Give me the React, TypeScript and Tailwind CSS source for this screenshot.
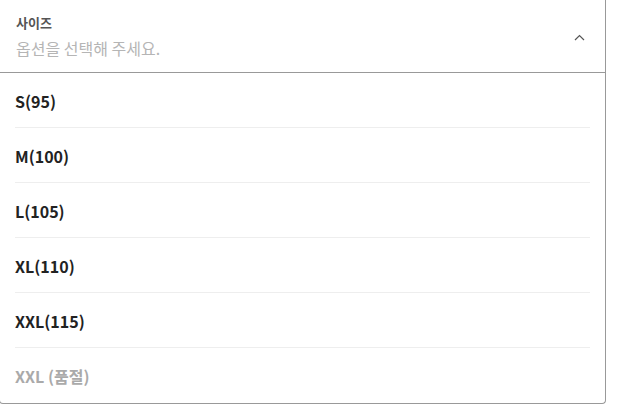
const SIZES = [
  { label: 'S(95)', soldOut: false },
  { label: 'M(100)', soldOut: false },
  { label: 'L(105)', soldOut: false },
  { label: 'XL(110)', soldOut: false },
  { label: 'XXL(115)', soldOut: false },
  { label: 'XXL (품절)', soldOut: true },
];

export default function App() {
  return (
    <div className="w-[618px] h-[407px] bg-white overflow-hidden font-['Noto_Sans_CJK_KR','Noto_Sans',sans-serif]">
      <div className="ml-[-1px] w-[607px] border border-t-0 border-[#999] rounded-b-[4px] bg-white">
        {/* header */}
        <div className="h-[73px] border-b border-[#999] flex items-center pl-[16px] pr-[20px]">
          <div className="flex-1">
            <p className="text-[13px] leading-[17px] font-bold text-[#555]">사이즈</p>
            <p className="mt-[7px] text-[16px] leading-[20px] text-[#b5b5b5]">옵션을 선택해 주세요.</p>
          </div>
          <svg width="11" height="7" viewBox="0 0 11 7" className="mt-[2px]" fill="none">
            <path d="M1 6 L5.5 1.5 L10 6" stroke="#555" strokeWidth="1.2" />
          </svg>
        </div>

        {/* options */}
        <ul>
          {SIZES.map((s, i) => (
            <li
              key={s.label}
              className={
                'mx-[15px] h-[55px] flex items-center pt-[1px] ' +
                (i < SIZES.length - 1 ? 'border-b border-[#eee]' : '')
              }
            >
              <span className={'text-[16px] font-bold ' + (s.soldOut ? 'text-[#aaa]' : 'text-[#222]')}>
                {s.label}
              </span>
            </li>
          ))}
        </ul>
      </div>
    </div>
  );
}
